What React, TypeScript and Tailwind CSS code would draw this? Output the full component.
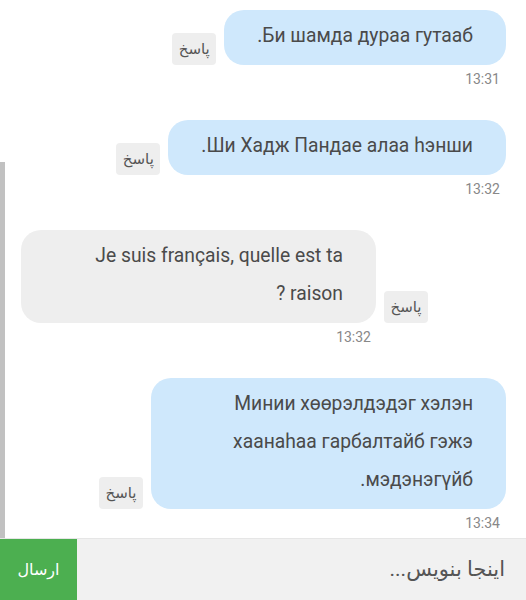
type Msg = {
  id: number
  text: string
  time: string
  mine: boolean
}

const messages: Msg[] = [
  { id: 1, text: 'Би шамда дураа гутааб.', time: '13:31', mine: true },
  { id: 2, text: 'Ши Хадж Пандае алаа һэнши.', time: '13:32', mine: true },
  { id: 3, text: 'Je suis français, quelle est ta raison ?', time: '13:32', mine: false },
  {
    id: 4,
    text: 'Минии хөөрэлдэдэг хэлэн хаанаһаа гарбалтайб гэжэ мэдэнэгүйб.',
    time: '13:34',
    mine: true,
  },
]

const font = "font-['Roboto','DejaVu_Sans',sans-serif]"

function ReplyButton() {
  return (
    <button
      className={`w-[44px] h-[32px] rounded-[4px] bg-[#eeeeee] text-[#555] text-[15px] ${font} flex items-center justify-center`}
    >
      پاسخ
    </button>
  )
}

function Bubble({ m }: { m: Msg }) {
  return (
    <div
      dir="rtl"
      className={`max-w-[355px] rounded-[20px] px-[33px] pt-[7px] pb-[10px] text-[19.3px] leading-[38px] text-[#4a4a4a] ${
        m.mine ? 'bg-[#cfe8fc]' : 'bg-[#eeeeee]'
      }`}
    >
      {m.text}
    </div>
  )
}

function MessageRow({ m }: { m: Msg }) {
  return (
    <div className={`flex ${m.mine ? 'justify-end' : 'justify-start'}`}>
      <div className="grid grid-cols-[auto_auto] gap-x-[8px] items-end">
        {m.mine ? (
          <>
            <ReplyButton />
            <Bubble m={m} />
            <div />
            <div className="mt-[4px] pr-[6px] text-right text-[14px] leading-[20px] text-[#888]">{m.time}</div>
          </>
        ) : (
          <>
            <Bubble m={m} />
            <ReplyButton />
            <div className="mt-[4px] pr-[5px] text-right text-[14px] leading-[20px] text-[#888]">{m.time}</div>
            <div />
          </>
        )}
      </div>
    </div>
  )
}

export default function App() {
  return (
    <div className={`w-[526px] h-[600px] bg-white flex flex-col overflow-hidden ${font}`}>
      <div className="relative flex-1 overflow-hidden border-b border-[#e6e6e6]">
        <div className="flex flex-col gap-[31px] pt-[10px] pl-[21px] pr-[20px]">
          {messages.map((m) => (
            <MessageRow key={m.id} m={m} />
          ))}
        </div>
        {/* scroll thumb */}
        <div className="absolute left-0 top-[162px] bottom-0 w-[5px] bg-[#c1c1c1]" />
      </div>

      <div className="h-[61px] flex">
        <button className="w-[77px] h-full bg-[#4caf50] text-white text-[16px]">ارسال</button>
        <div
          dir="rtl"
          className="flex-1 h-full bg-[#f1f1f1] flex items-center pr-[21px] text-[21px] text-[#555]"
        >
          اینجا بنویس...
        </div>
      </div>
    </div>
  )
}
